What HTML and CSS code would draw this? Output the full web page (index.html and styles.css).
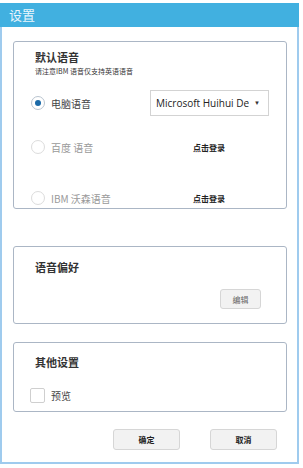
FILE: index.html
```html
<!DOCTYPE html>
<html lang="zh-CN">
<head>
    <meta charset="UTF-8">
    <title>设置</title>
    <link rel="stylesheet" href="styles.css">
</head>
<body>
    <div class="window">
        <div class="titlebar">设置</div>

        <div class="content">
            <!-- 默认语音 -->
            <div class="group group-voice">
                <div class="group-title">默认语音</div>
                <div class="group-note">请注意IBM 语音仅支持英语语音</div>

                <div class="voice-row row-first">
                    <span class="radio checked"></span>
                    <span class="radio-label">电脑语音</span>
                    <div class="select">
                        <span class="select-text">Microsoft Huihui De</span>
                        <span class="arrow">▼</span>
                    </div>
                </div>
                <div class="voice-row row-second">
                    <span class="radio"></span>
                    <span class="radio-label disabled">百度 语音</span>
                    <span class="login">点击登录</span>
                </div>
                <div class="voice-row row-third">
                    <span class="radio"></span>
                    <span class="radio-label disabled">IBM 沃森语音</span>
                    <span class="login">点击登录</span>
                </div>
            </div>

            <!-- 语音偏好 -->
            <div class="group group-pref">
                <div class="group-title">语音偏好</div>
                <div class="pref-actions">
                    <button class="btn-edit">编辑</button>
                </div>
            </div>

            <!-- 其他设置 -->
            <div class="group group-other">
                <div class="group-title">其他设置</div>
                <div class="check-row">
                    <span class="checkbox"></span>
                    <span class="check-label">预览</span>
                </div>
            </div>

            <div class="footer">
                <button class="btn">确定</button>
                <button class="btn">取消</button>
            </div>
        </div>
    </div>
</body>
</html>
```

FILE: styles.css
```css
body {
    margin: 0;
    background-color: #ffffff;
    font-family: "Noto Sans CJK SC", "Open Sans", sans-serif;
    color: #222;
}
.window {
    margin-top: 3px;
    width: 295px;
    height: 459px;
    border: 2px solid #9fcbee;
    border-top: none;
    background-color: #fff;
}
.titlebar {
    height: 24px;
    margin: 0 -2px;
    padding-left: 9px;
    background-color: #41b0e0;
    color: #eaf6fc;
    font-size: 13px;
    line-height: 23px;
}
.content {
    padding: 14px 8px 0 11px;
}
.group {
    box-sizing: border-box;
    width: 274px;
    border: 1px solid #abb6c5;
    border-radius: 3px;
    padding: 8px 0 0 21px;
}
.group-title {
    font-size: 11px;
    font-weight: bold;
    line-height: 14px;
    color: #333;
}
.group-note {
    margin-top: 2px;
    font-size: 7px;
    line-height: 10px;
    color: #333;
}
.group-voice {
    height: 168px;
}
.voice-row {
    display: flex;
    align-items: center;
    height: 26px;
    margin-left: -4px;
}
.row-first {
    margin-top: 14px;
}
.row-second {
    margin-top: 18px;
}
.row-third {
    margin-top: 25px;
}
.radio {
    box-sizing: border-box;
    width: 14px;
    height: 14px;
    border: 1px solid #dcdcdc;
    border-radius: 50%;
    position: relative;
}
.radio.checked {
    border-color: #b9c4cf;
}
.radio.checked::after {
    content: "";
    position: absolute;
    left: 3px;
    top: 3px;
    width: 6px;
    height: 6px;
    border-radius: 50%;
    background-color: #1b6aa8;
}
.radio-label {
    width: 99px;
    margin-left: 6px;
    font-size: 10px;
    color: #444;
}
.radio-label.disabled {
    color: #9a9a9a;
}
.select {
    box-sizing: border-box;
    display: flex;
    align-items: center;
    justify-content: space-between;
    width: 119px;
    height: 26px;
    padding: 0 8px 0 5px;
    border: 1px solid #d3d3d3;
    font-family: "Open Sans", sans-serif;
    font-size: 10px;
    color: #222;
}
.select-text {
    white-space: nowrap;
    overflow: hidden;
}
.arrow {
    margin-left: 4px;
    font-size: 6px;
    color: #333;
}
.login {
    margin-left: 43px;
    font-size: 8px;
    font-weight: bold;
    color: #222;
}
.group-pref {
    height: 78px;
    margin-top: 37px;
    padding-top: 13px;
}
.pref-actions {
    display: flex;
    justify-content: flex-end;
    margin-top: 15px;
    padding-right: 25px;
}
.btn-edit {
    width: 41px;
    height: 20px;
    padding: 0;
    border: 1px solid #d6d6d6;
    border-radius: 3px;
    background-color: #f2f2f2;
    font-family: inherit;
    font-size: 8px;
    color: #666;
}
.group-other {
    height: 70px;
    margin-top: 18px;
    padding-top: 12px;
}
.check-row {
    display: flex;
    align-items: center;
    margin-top: 19px;
    margin-left: -5px;
}
.checkbox {
    box-sizing: border-box;
    width: 15px;
    height: 15px;
    border: 1px solid #cfcfcf;
    border-radius: 2px;
}
.check-label {
    margin-left: 6px;
    font-size: 10px;
    color: #444;
}
.footer {
    display: flex;
    gap: 30px;
    margin-top: 17px;
    padding-left: 100px;
}
.btn {
    width: 67px;
    height: 21px;
    padding: 0;
    border: 1px solid #d6d6d6;
    border-radius: 3px;
    background-color: #f2f2f2;
    font-family: inherit;
    font-size: 8px;
    font-weight: bold;
    color: #222;
}
```
